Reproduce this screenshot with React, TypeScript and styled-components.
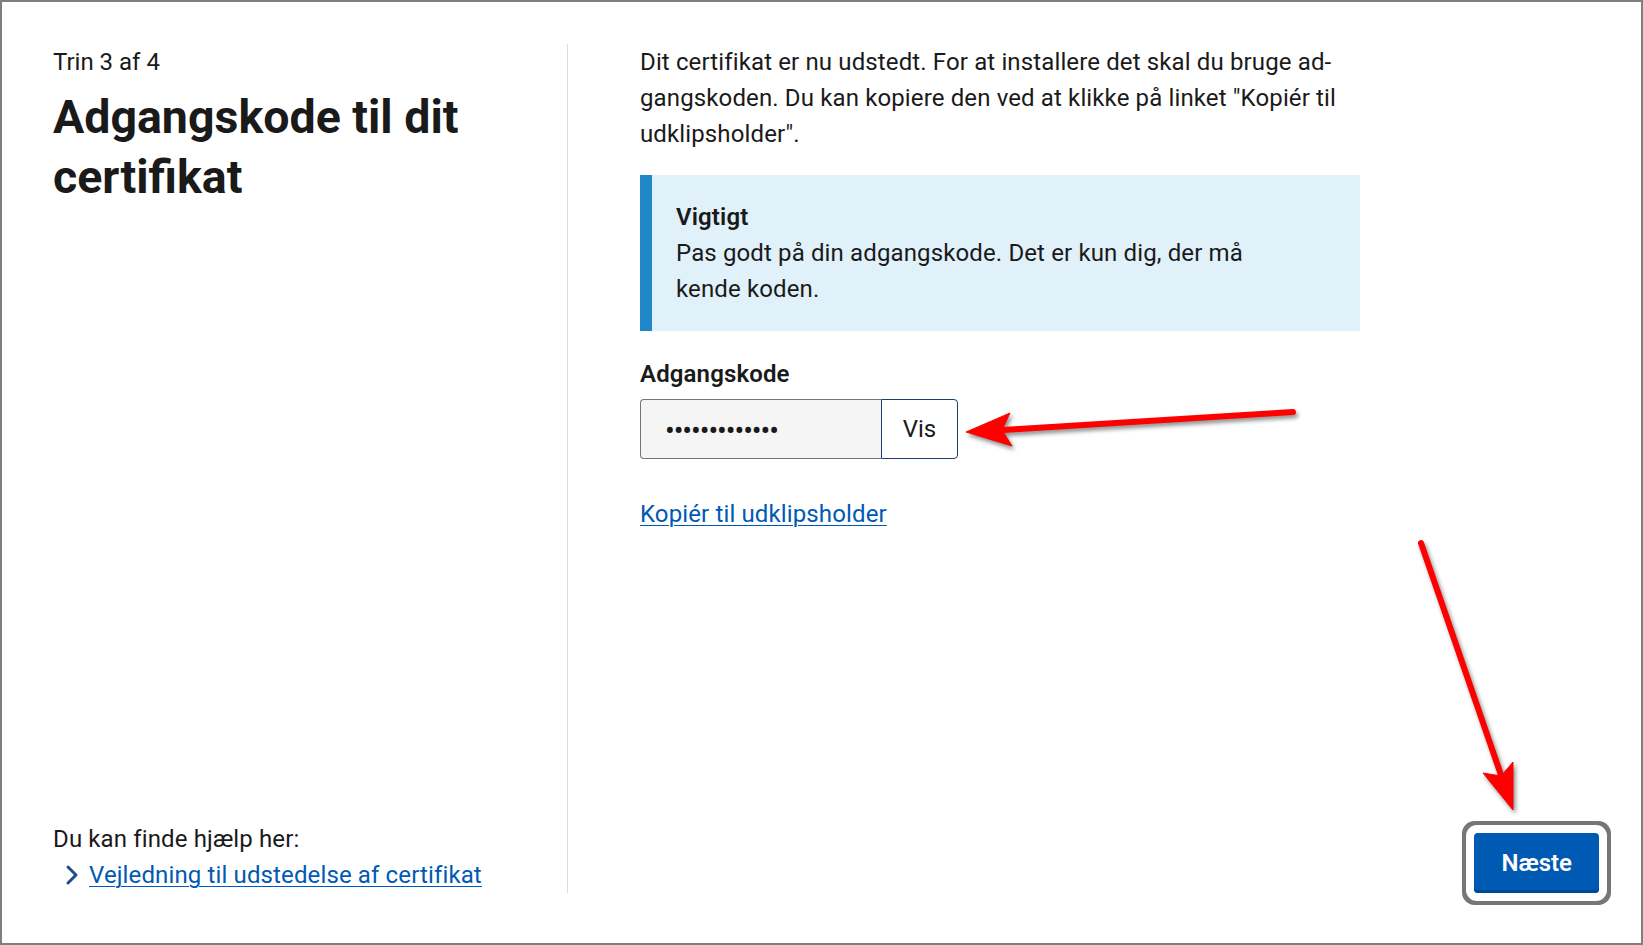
import styled, { createGlobalStyle } from 'styled-components';

const GlobalStyle = createGlobalStyle`
   html, body {
      margin: 0;
      padding: 0;
   }
   body {
      font-family: Roboto, "Liberation Sans", Arial, sans-serif;
      color: #1a1a1a;
      background: #ffffff;
      letter-spacing: 0.13px;
   }
   * {
      box-sizing: border-box;
   }
`;

const Screen = styled.div`
   position: relative;
   display: flex;
   height: 100vh;
   border: 2px solid #7f7f7f;
   padding: 42px 42px 50px 51px;
   overflow: hidden;
`;

const Sidebar = styled.aside`
   width: 515px;
   flex-shrink: 0;
   display: flex;
   flex-direction: column;
   justify-content: space-between;
   border-right: 1px solid #dcdcdc;
   padding-right: 24px;
`;

const StepLabel = styled.p`
   margin: 0;
   font-size: 24px;
   line-height: 36px;
   letter-spacing: 0;
`;

const Heading = styled.h1`
   margin: 7px 0 0;
   font-size: 46.5px;
   line-height: 60px;
   font-weight: 700;
   letter-spacing: 0;
`;

const HelpText = styled.p`
   margin: 0;
   font-size: 24px;
   line-height: 36px;
`;

const HelpList = styled.ul`
   margin: 0;
   padding: 0;
   list-style: none;
`;

const HelpItem = styled.li`
   display: flex;
   align-items: center;
   font-size: 24px;
   line-height: 36px;
   svg {
      margin-left: 11px;
      margin-right: 9px;
      flex-shrink: 0;
   }
`;

const Link = styled.a`
   color: #0059b3;
   text-decoration: underline;
   text-underline-offset: 3px;
   text-decoration-thickness: 1px;
   cursor: pointer;
`;

const Main = styled.main`
   flex: 1;
   display: flex;
   flex-direction: column;
   padding-left: 72px;
`;

const Content = styled.div`
   max-width: 720px;
`;

const Paragraph = styled.p`
   margin: 0;
   font-size: 24px;
   line-height: 36px;
`;

const Alert = styled.div`
   margin-top: 23px;
   background: #e1f1fa;
   border-left: 12px solid #1f87c8;
   padding: 24px;
   font-size: 24px;
   line-height: 36px;
`;

const AlertTitle = styled.p`
   margin: 0;
   font-weight: 600;
`;

const AlertText = styled.p`
   margin: 0;
   max-width: 600px;
`;

const Label = styled.label`
   display: block;
   margin-top: 25px;
   font-size: 24px;
   line-height: 36px;
   font-weight: 600;
`;

const InputRow = styled.div`
   display: flex;
   margin-top: 7px;
`;

const PasswordInput = styled.input`
   width: 241px;
   height: 60px;
   border: 1px solid #757575;
   border-right: none;
   border-radius: 4px 0 0 4px;
   background: #f5f5f5;
   padding: 4px 24px 0;
   font-family: inherit;
   font-size: 29px;
   letter-spacing: -1.1px;
   color: #1a1a1a;
   outline: none;
`;

const ShowButton = styled.button`
   width: 77px;
   height: 60px;
   border: 1px solid #1b3f6f;
   border-radius: 0 4px 4px 0;
   background: #ffffff;
   font-family: inherit;
   font-size: 24px;
   color: #1a1a1a;
   cursor: pointer;
`;

const CopyLine = styled.p`
   margin: 37px 0 0;
   font-size: 24px;
   line-height: 36px;
`;

const Footer = styled.div`
   margin-top: auto;
   display: flex;
   justify-content: flex-end;
`;

const NextButton = styled.button`
   padding: 12px 27px;
   border: none;
   border-radius: 4px;
   background: #0059b3;
   color: #ffffff;
   font-family: inherit;
   font-size: 24px;
   line-height: 36px;
   font-weight: 600;
   cursor: pointer;
   box-shadow: inset 0 -3px 0 0 #004993, 0 0 0 8px #ffffff, 0 0 0 12px #767676;
`;

const Arrows = styled.svg`
   position: absolute;
   top: -2px;
   left: -2px;
   pointer-events: none;
   filter: drop-shadow(2px 3px 2px rgba(0, 0, 0, 0.45));
`;

const Chevron = () => (
   <svg width="16" height="24" viewBox="0 0 16 24" aria-hidden="true">
      <path
         d="M4 4 L12 12 L4 20"
         fill="none"
         stroke="#1a4e8c"
         strokeWidth="3"
         strokeLinecap="round"
         strokeLinejoin="round"
      />
   </svg>
);

const App: React.FC = () => {
   return (
      <>
         <GlobalStyle />
         <Screen>
            <Sidebar>
               <div>
                  <StepLabel>Trin 3 af 4</StepLabel>
                  <Heading>Adgangskode til dit certifikat</Heading>
               </div>
               <div>
                  <HelpText>Du kan finde hjælp her:</HelpText>
                  <HelpList>
                     <HelpItem>
                        <Chevron />
                        <Link>Vejledning til udstedelse af certifikat</Link>
                     </HelpItem>
                  </HelpList>
               </div>
            </Sidebar>
            <Main>
               <Content>
                  <Paragraph>
                     Dit certifikat er nu udstedt. For at installere det skal du bruge
                     ad{'\u00AD'}gangskoden. Du kan kopiere den ved at klikke på linket
                     "Kopiér til udklipsholder".
                  </Paragraph>
                  <Alert>
                     <AlertTitle>Vigtigt</AlertTitle>
                     <AlertText>
                        Pas godt på din adgangskode. Det er kun dig, der må kende koden.
                     </AlertText>
                  </Alert>
                  <Label htmlFor="password">Adgangskode</Label>
                  <InputRow>
                     <PasswordInput
                        id="password"
                        type="password"
                        defaultValue="Xk7pQ2mR9sLw4"
                        readOnly
                     />
                     <ShowButton type="button">Vis</ShowButton>
                  </InputRow>
                  <CopyLine>
                     <Link>Kopiér til udklipsholder</Link>
                  </CopyLine>
               </Content>
               <Footer>
                  <NextButton type="button">Næste</NextButton>
               </Footer>
            </Main>
            <Arrows width="1643" height="945" viewBox="0 0 1643 945">
               <g fill="#ff0000" stroke="#ff0000">
                  <line x1="1293" y1="412" x2="1003" y2="430" strokeWidth="6" strokeLinecap="round" />
                  <polygon points="966,432 1010,413 1002,430 1012,446" strokeWidth="1" />
                  <line x1="1421" y1="543" x2="1501" y2="775" strokeWidth="6" strokeLinecap="round" />
                  <polygon points="1513,810 1483,773 1501,776 1513,762" strokeWidth="1" />
               </g>
            </Arrows>
         </Screen>
      </>
   );
};

export default App;
